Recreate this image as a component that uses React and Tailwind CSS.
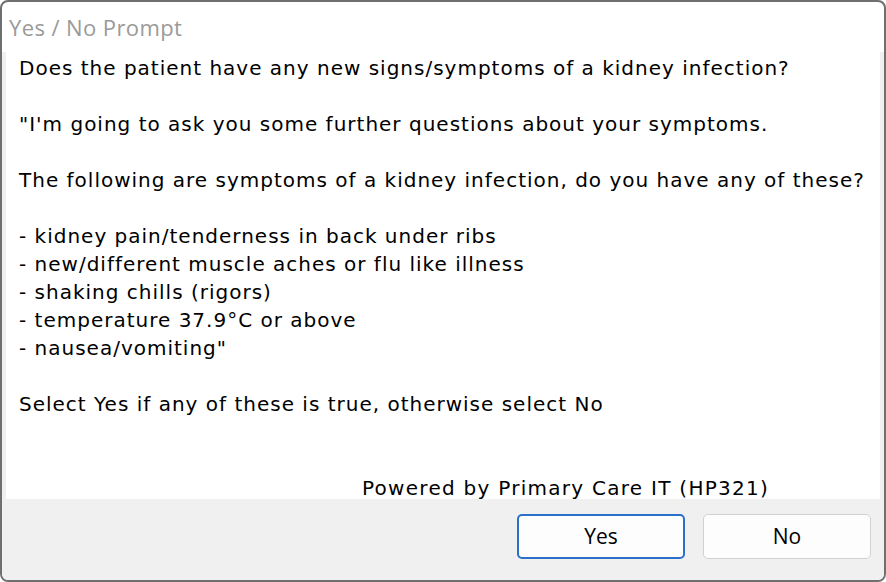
import React from 'react';

const lines = [
  'Does the patient have any new signs/symptoms of a kidney infection?',
  '',
  '"I\'m going to ask you some further questions about your symptoms.',
  '',
  'The following are symptoms of a kidney infection, do you have any of these?',
  '',
  '- kidney pain/tenderness in back under ribs',
  '- new/different muscle aches or flu like illness',
  '- shaking chills (rigors)',
  '- temperature 37.9°C or above',
  '- nausea/vomiting"',
  '',
  'Select Yes if any of these is true, otherwise select No',
];

export default function App() {
  return (
    <div className="w-[886px] h-[582px] bg-white">
      <div
        className="w-full h-full flex flex-col border-2 border-[#6f6f6f] rounded-[8px] overflow-hidden bg-white"
        style={{ fontFamily: '"Open Sans", "Noto Sans", sans-serif' }}
      >
        {/* Title bar */}
        <div className="h-[50px] flex items-center pl-[7px] text-[22px] tracking-[0.4px] text-[#9a9a9a]">
          Yes / No Prompt
        </div>

        {/* Client area */}
        <div className="flex-1 bg-[#f0f0f0] flex flex-col px-[4px]">
          <div className="h-[447px] bg-white flex flex-col pl-[13px] pt-[2px] text-[20px] tracking-[1px] leading-[28px] text-black font-['DejaVu_Sans',sans-serif]">
            {lines.map((line, i) => (
              <div key={i} className="h-[28px] whitespace-pre">{line}</div>
            ))}
            <div className="flex-1" />
            <div className="h-[22px] leading-[22px] pl-[343px] tracking-[1.27px]">
              Powered by Primary Care IT (HP321)
            </div>
          </div>

          <div className="flex justify-end gap-[18px] pt-[15px] pr-[9px]">
            <button className="w-[168px] h-[45px] rounded-[5px] border-2 border-[#2a6fc9] bg-[#fdfdfd] text-[21px] text-black">
              Yes
            </button>
            <button className="w-[168px] h-[45px] rounded-[5px] border border-[#d0d0d0] bg-[#fdfdfd] text-[21px] text-black">
              No
            </button>
          </div>
        </div>
      </div>
    </div>
  );
}
